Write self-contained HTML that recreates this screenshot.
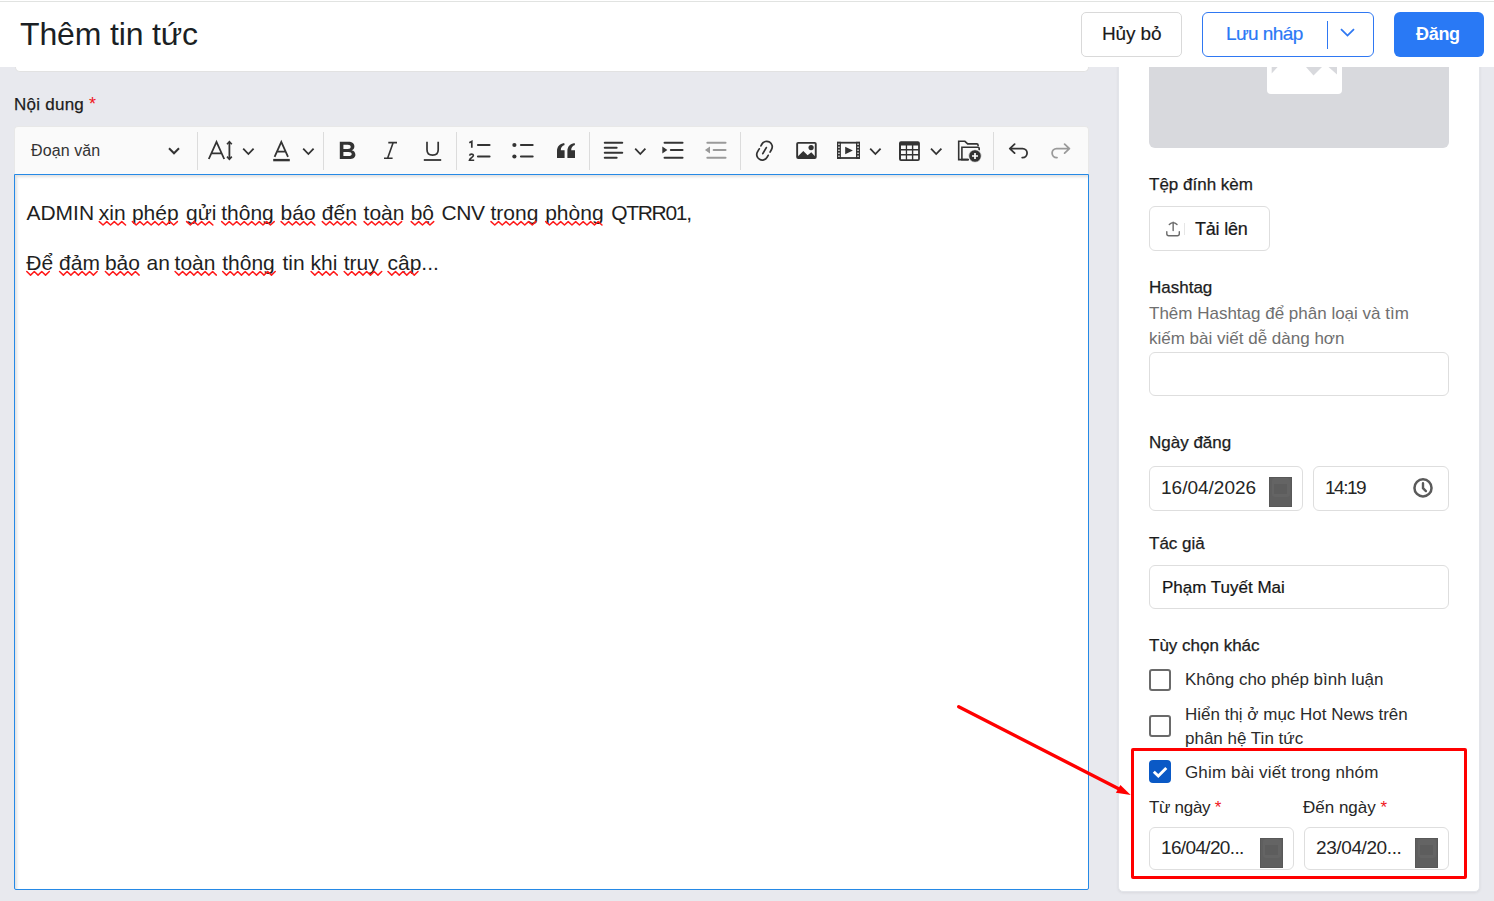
<!DOCTYPE html>
<html><head><meta charset="utf-8">
<style>
*{box-sizing:border-box;margin:0;padding:0}
html,body{width:1494px;height:901px;overflow:hidden;background:#e8e9ee;font-family:"Liberation Sans",sans-serif;color:#1f1f1f}
.a{position:absolute}
.t{position:absolute;line-height:1;white-space:nowrap}
.lbl{font-size:17px;color:#1c1c1c;-webkit-text-stroke:0.25px #1c1c1c}
.req{color:#f0161c;-webkit-text-stroke:0}
.inp{position:absolute;background:#fff;border:1px solid #dedede;border-radius:6px}
.sep{position:absolute;top:132px;width:1px;height:38px;background:#dcdcdc}
svg{position:absolute;overflow:visible}
.blk{position:absolute;background:#5f5f5f;border:1px solid #585858}
.blk::before{content:"";position:absolute;left:2px;top:0;width:18px;height:19px;border-radius:3px;background:#646464}
.blk::after{content:"";position:absolute;left:4px;top:6px;width:13px;height:10px;background:#5d5d5d}
.sq{position:absolute;width:22px;height:22px;border:2px solid #6a6a6a;border-radius:3px;background:#fff}
.ed{font-size:21px;color:#1f1f1f}
.opt{font-size:17px;color:#2b2b2b}
</style></head><body>

<!-- right card -->
<div class="a" style="left:1118px;top:-10px;width:362px;height:902px;background:#fff;border:1px solid #e3e5ea;border-radius:5px;box-shadow:0 1px 3px rgba(0,0,0,0.07)"></div>
<!-- image placeholder -->
<div class="a" style="left:1149px;top:30px;width:300px;height:118px;background:#d8d9dd;border-radius:6px"></div>
<svg style="left:1267px;top:40px" width="75" height="54" viewBox="0 0 75 54">
  <rect x="0" y="0" width="75" height="54" rx="4" fill="#fff"/>
  <polygon points="4.7,27 4.7,33.5 10.6,27" fill="#d8d9dd"/>
  <polygon points="39,27 55,27 46.5,35.4" fill="#d8d9dd"/>
  <polygon points="61.5,27 70,27 70,34.6" fill="#d8d9dd"/>
</svg>

<!-- header -->
<div class="a" style="left:0;top:0;width:1494px;height:67px;background:#fff"></div>
<div class="a" style="left:0;top:1px;width:1494px;height:1px;background:#e1e3e1"></div>
<!-- left card bottom -->
<div class="a" style="left:15px;top:-10px;width:1074px;height:82px;background:#fff;border:1px solid #e2e2e2;border-top:0;border-radius:0 0 5px 5px"></div>
<div class="a" style="left:0;top:0;width:1494px;height:67px;background:#fff"></div>
<div class="a" style="left:0;top:1px;width:1494px;height:1px;background:#e1e3e1"></div>
<div class="t" style="left:20px;top:18px;font-size:32px;color:#1b1f24;letter-spacing:-0.15px">Thêm tin tức</div>

<div class="a" style="left:1081px;top:12px;width:101px;height:45px;border:1px solid #d9d9d9;border-radius:5px;background:#fff"></div>
<div class="t" style="left:1102px;top:24px;font-size:19px;color:#1a1a1a;letter-spacing:-0.15px;-webkit-text-stroke:0.15px #1a1a1a">Hủy bỏ</div>

<div class="a" style="left:1202px;top:12px;width:172px;height:45px;border:1px solid #2f78f2;border-radius:6px;background:#fff"></div>
<div class="t" style="left:1226px;top:24px;font-size:19px;color:#2b78f5;letter-spacing:-0.6px;-webkit-text-stroke:0.2px #2b78f5">Lưu nháp</div>
<div class="a" style="left:1327px;top:21px;width:1px;height:28px;background:#2f78f2"></div>
<svg style="left:1340px;top:28px" width="15" height="9" viewBox="0 0 15 9"><path d="M1 1.2 L7.5 7.6 L14 1.2" fill="none" stroke="#2f78f2" stroke-width="1.8"/></svg>

<div class="a" style="left:1394px;top:12px;width:90px;height:45px;background:#2979f5;border-radius:6px"></div>
<div class="t" style="left:1416px;top:25px;font-size:18px;font-weight:bold;color:#fff;letter-spacing:-0.3px">Đăng</div>

<!-- Nội dung -->
<div class="t lbl" style="left:14px;top:95px;letter-spacing:0.25px">Nội dung <span class="req" style="font-size:18px">*</span></div>

<!-- toolbar -->
<div class="a" style="left:14px;top:126px;width:1075px;height:49px;background:#fafafa;border:1px solid #e8e8e8;border-bottom:0;border-radius:4px 4px 0 0"></div>
<div class="a" style="left:14px;top:174px;width:1075px;height:716px;background:#fff;border:1px solid #2589e6;border-radius:0 0 2px 2px;box-shadow:inset 2px 2px 3px rgba(0,0,0,0.12)"></div>

<div class="t" style="left:31px;top:143px;font-size:16px;color:#333;letter-spacing:0.1px">Đoạn văn</div>
<svg style="left:168px;top:147px" width="12" height="8" viewBox="0 0 12 8"><path d="M1 1.3 L6 6.3 L11 1.3" fill="none" stroke="#333" stroke-width="2"/></svg>

<div class="sep" style="left:197px"></div>
<div class="sep" style="left:323px"></div>
<div class="sep" style="left:456px"></div>
<div class="sep" style="left:589px"></div>
<div class="sep" style="left:740px"></div>
<div class="sep" style="left:993px"></div>


<!-- toolbar icons -->
<svg style="left:0;top:0" width="1494" height="901" viewBox="0 0 1494 901">
 <g fill="none" stroke="#333" stroke-width="1.8">
  <!-- font size -->
  <path d="M208.8 159 L216.5 141.9 L224.2 159 M211.3 153.4 H221.7"/>
  <path d="M229.4 142 V159" />
  <path d="M227 144.2 L229.4 141.6 L231.8 144.2 M227 156.6 L229.4 159.2 L231.8 156.6" stroke-width="1.6"/>
  <path d="M243.2 148.6 L248.4 154 L253.6 148.6" />
  <!-- font color -->
  <path d="M274.6 156.8 L281.3 141.9 L288 156.8 M276.8 151.7 H285.8"/>
  <path d="M273.2 160.1 H289.8" stroke-width="2.4"/>
  <path d="M303.2 148.6 L308.4 154 L313.6 148.6" />
  <!-- italic -->
  <path d="M388.3 142.6 H397 M384 158.2 H392.6 M393.2 142.6 L387.6 158.2" stroke-width="1.6"/>
  <!-- underline -->
  <path d="M427 141.8 V149.8 C427 153.3 429.4 155.2 432.6 155.2 C435.8 155.2 438.2 153.3 438.2 149.8 V141.8" stroke-width="1.7"/>
  <path d="M423.8 160 H441.2" stroke-width="1.8"/>
  <!-- numbered list -->
  <path d="M478 145 H489.5 M478 156.5 H489.5" stroke-width="2.2" stroke-linecap="round"/>
  <path d="M469.3 142.8 L471.8 141.4 V147.8" stroke-width="1.7"/>
  <path d="M469.6 155.6 C469.8 153.8 473.4 153.6 473.4 155.5 C473.4 157.2 469.8 158.2 469.4 160.3 H474.2" stroke-width="1.6"/>
  <!-- bulleted list -->
  <path d="M521 145 H532.6 M521 156.5 H532.6" stroke-width="2.2" stroke-linecap="round"/>
  <!-- align -->
  <path d="M604.8 142.8 H622.2 M604.8 147.7 H616.6 M604.8 152.7 H622.2 M604.8 157.8 H616.6" stroke-width="2.1" stroke-linecap="round"/>
  <path d="M635.2 148.6 L640.3 154 L645.4 148.6" />
  <!-- indent -->
  <path d="M664.6 142.8 H682.5 M670.9 150 H682.5 M664.6 157.8 H682.5" stroke-width="2.1" stroke-linecap="round"/>
  <path d="M870.2 148.6 L875.4 154 L880.6 148.6" />
  <path d="M931 148.6 L936.2 154 L941.4 148.6" />
  <!-- link -->
  <g transform="translate(764.5 150.7) rotate(30)" stroke-width="1.75" stroke-linecap="round">
    <path d="M-5.5 -2.4 V-4.5 A5.5 5.5 0 0 1 5.5 -4.5 V-1.6"/>
    <path d="M-5.5 1.0 V4.5 A5.5 5.5 0 0 0 5.5 4.5 V2.2"/>
    <path d="M0 -3.6 V3.4"/>
  </g>
  <!-- image frame -->
  <rect x="797.15" y="142.85" width="18.6" height="15.1" rx="1" stroke-width="1.9"/>
  <!-- media frame -->
  <rect x="837.9" y="142.7" width="21.2" height="15.3" stroke-width="1.8"/>
  <!-- folder -->
  <path d="M968 159.6 H958.7 V141.3 H964.9 L967.7 143.9 H976.8 Q978.1 143.9 978.1 145.3 V146.3" stroke-width="1.6"/>
  <path d="M969 159.6 H961.9 V147.2 H978 Q979.2 147.2 979.2 148.4 V150.3" stroke-width="1.6"/>
  <!-- undo -->
  <path d="M1014.6 144.2 L1009.8 148.6 L1014.6 153.1 M1009.8 148.6 H1022.6 A4.5 4.5 0 0 1 1022.6 157.6 H1022.2" stroke-width="1.8" stroke-linecap="round" stroke-linejoin="round"/>
 </g>
 <g fill="#333">
  <!-- bold -->
  <path fill-rule="evenodd" d="M339.8 141.7 H348.3 C352.3 141.7 354.4 143.7 354.4 146.4 C354.4 148.3 353.3 149.7 351.6 150.2 C354 150.6 355.4 152.5 355.4 154.8 C355.4 157.6 353.2 159.1 349.3 159.1 H339.8 Z M343.4 144.7 V149 H347.8 C349.7 149 350.7 148.3 350.7 146.8 C350.7 145.4 349.7 144.7 347.8 144.7 Z M343.4 151.9 V156.1 H348.4 C350.6 156.1 351.7 155.4 351.7 154 C351.7 152.6 350.6 151.9 348.4 151.9 Z"/>
  <!-- bullets -->
  <circle cx="514.4" cy="145" r="2.1"/><circle cx="514.4" cy="156.5" r="2.1"/>
  <!-- quote -->
  <path d="M557 157.9 V151.3 C557 146.6 559.5 143.8 564.2 143 L564.6 145.1 C562 145.9 560.9 147.6 560.8 150.3 H564.6 V157.9 Z"/>
  <path d="M567.4 157.9 V151.3 C567.4 146.6 569.9 143.8 574.6 143 L575 145.1 C572.4 145.9 571.3 147.6 571.2 150.3 H575 V157.9 Z"/>
  <!-- indent triangle -->
  <polygon points="662.3,146.5 667.4,150 662.3,153.4"/>
  <!-- image mountains & sun -->
  <polygon points="798,156.2 803.3,151 807.6,155.2 811.3,152.2 815,156.2 815,157.5 798,157.5"/>
  <circle cx="811.1" cy="147.6" r="2.6"/>
  <!-- media play + strips -->
  <rect x="837" y="141.8" width="3.9" height="17.1"/>
  <rect x="856" y="141.8" width="4" height="17.1"/>
  <polygon points="845.2,146.8 852.9,150.5 845.2,154.2"/>
  <!-- table -->
  <path fill-rule="evenodd" d="M901 141.2 H917.9 Q919.9 141.2 919.9 143.2 V158.9 Q919.9 160.9 917.9 160.9 H901 Q899 160.9 899 158.9 V143.2 Q899 141.2 901 141.2 Z M901 145.5 V148.9 H905.8 V145.5 Z M907.1 145.5 V148.9 H911.9 V145.5 Z M913.3 145.5 V148.9 H918.1 V145.5 Z M901 150.5 V154 H905.8 V150.5 Z M907.1 150.5 V154 H911.9 V150.5 Z M913.3 150.5 V154 H918.1 V150.5 Z M901 155.6 V159.2 H905.8 V155.6 Z M907.1 155.6 V159.2 H911.9 V155.6 Z M913.3 155.6 V159.2 H918.1 V155.6 Z"/>
  <!-- folder plus -->
  <circle cx="975" cy="156" r="6.3" stroke="#fafafa" stroke-width="0.8"/>
 </g>
 <g fill="#c8c8c8">
  <rect x="838" y="143.6" width="1.9" height="1.3"/><rect x="838" y="146.6" width="1.9" height="1.3"/><rect x="838" y="149.6" width="1.9" height="1.3"/><rect x="838" y="152.6" width="1.9" height="1.3"/><rect x="838" y="155.6" width="1.9" height="1.3"/>
  <rect x="857.1" y="143.6" width="1.9" height="1.3"/><rect x="857.1" y="146.6" width="1.9" height="1.3"/><rect x="857.1" y="149.6" width="1.9" height="1.3"/><rect x="857.1" y="152.6" width="1.9" height="1.3"/><rect x="857.1" y="155.6" width="1.9" height="1.3"/>
 </g>
 <path d="M975 153 V159 M972 156 H978" stroke="#fff" stroke-width="1.7"/>
 <!-- outdent & redo gray -->
 <g fill="none" stroke="#9a9a9a">
  <path d="M707.4 142.8 H725.5 M713.7 150 H725.5 M707.4 157.8 H725.5" stroke-width="2.1" stroke-linecap="round"/>
  <path d="M1064.6 144.2 L1069.4 148.6 L1064.6 153.1 M1069.4 148.6 H1056.6 A4.5 4.5 0 0 0 1056.6 157.6 H1057" stroke-width="1.8" stroke-linecap="round" stroke-linejoin="round"/>
 </g>
 <polygon points="710,146.5 704.9,150 710,153.4" fill="#9a9a9a"/>
</svg>

<!-- editor text -->
<div class="t ed" style="left:26.4px;top:202px">ADMIN</div>
<div class="t ed" style="left:98.8px;top:202px">xin</div>
<div class="t ed" style="left:131.9px;top:202px">phép</div>
<div class="t ed" style="left:186.1px;top:202px">gửi</div>
<div class="t ed" style="left:221.2px;top:202px">thông</div>
<div class="t ed" style="left:280.6px;top:202px">báo</div>
<div class="t ed" style="left:321.8px;top:202px">đến</div>
<div class="t ed" style="left:363.6px;top:202px">toàn</div>
<div class="t ed" style="left:410.7px;top:202px">bộ</div>
<div class="t ed" style="left:441.4px;top:202px;letter-spacing:-0.4px">CNV</div>
<div class="t ed" style="left:490.5px;top:202px">trong</div>
<div class="t ed" style="left:545.2px;top:202px">phòng</div>
<div class="t ed" style="left:611.2px;top:202px;letter-spacing:-1.3px">QTRR01,</div>
<div class="t ed" style="left:26.3px;top:252px">Để</div>
<div class="t ed" style="left:59.1px;top:252px">đảm</div>
<div class="t ed" style="left:104.9px;top:252px">bảo</div>
<div class="t ed" style="left:146.6px;top:252px">an</div>
<div class="t ed" style="left:174.6px;top:252px">toàn</div>
<div class="t ed" style="left:222.2px;top:252px">thông</div>
<div class="t ed" style="left:282.4px;top:252px">tin</div>
<div class="t ed" style="left:310.6px;top:252px">khi</div>
<div class="t ed" style="left:343.7px;top:252px">truy</div>
<div class="t ed" style="left:387.5px;top:252px">cập...</div>
<svg style="left:0;top:0" width="1494" height="901"><path d="M99.30,221.6 L103.05,225.0 L106.80,221.6 L110.55,225.0 L114.30,221.6 L118.05,225.0 L121.80,221.6 L125.55,225.0 M132.40,221.6 L136.15,225.0 L139.90,221.6 L143.65,225.0 L147.40,221.6 L151.15,225.0 L154.90,221.6 L158.65,225.0 L162.40,221.6 L166.15,225.0 L169.90,221.6 L173.65,225.0 L177.40,221.6 M186.60,221.6 L190.35,225.0 L194.10,221.6 L197.85,225.0 L201.60,221.6 L205.35,225.0 L209.10,221.6 L212.85,225.0 M221.70,221.6 L225.45,225.0 L229.20,221.6 L232.95,225.0 L236.70,221.6 L240.45,225.0 L244.20,221.6 L247.95,225.0 L251.70,221.6 L255.45,225.0 L259.20,221.6 L262.95,225.0 L266.70,221.6 L270.45,225.0 L274.20,221.6 M281.10,221.6 L284.85,225.0 L288.60,221.6 L292.35,225.0 L296.10,221.6 L299.85,225.0 L303.60,221.6 L307.35,225.0 L311.10,221.6 L314.85,225.0 M322.30,221.6 L326.05,225.0 L329.80,221.6 L333.55,225.0 L337.30,221.6 L341.05,225.0 L344.80,221.6 L348.55,225.0 L352.30,221.6 L356.05,225.0 M364.10,221.6 L367.85,225.0 L371.60,221.6 L375.35,225.0 L379.10,221.6 L382.85,225.0 L386.60,221.6 L390.35,225.0 L394.10,221.6 L397.85,225.0 L401.60,221.6 M411.20,221.6 L414.95,225.0 L418.70,221.6 L422.45,225.0 L426.20,221.6 L429.95,225.0 L433.70,221.6 M491.00,221.6 L494.75,225.0 L498.50,221.6 L502.25,225.0 L506.00,221.6 L509.75,225.0 L513.50,221.6 L517.25,225.0 L521.00,221.6 L524.75,225.0 L528.50,221.6 L532.25,225.0 L536.00,221.6 M545.70,221.6 L549.45,225.0 L553.20,221.6 L556.95,225.0 L560.70,221.6 L564.45,225.0 L568.20,221.6 L571.95,225.0 L575.70,221.6 L579.45,225.0 L583.20,221.6 L586.95,225.0 L590.70,221.6 L594.45,225.0 L598.20,221.6 L601.95,225.0 M26.80,271.5 L30.55,275.1 L34.30,271.5 L38.05,275.1 L41.80,271.5 L45.55,275.1 L49.30,271.5 M59.60,271.5 L63.35,275.1 L67.10,271.5 L70.85,275.1 L74.60,271.5 L78.35,275.1 L82.10,271.5 L85.85,275.1 L89.60,271.5 L93.35,275.1 L97.10,271.5 M105.40,271.5 L109.15,275.1 L112.90,271.5 L116.65,275.1 L120.40,271.5 L124.15,275.1 L127.90,271.5 L131.65,275.1 L135.40,271.5 L139.15,275.1 M175.10,271.5 L178.85,275.1 L182.60,271.5 L186.35,275.1 L190.10,271.5 L193.85,275.1 L197.60,271.5 L201.35,275.1 L205.10,271.5 L208.85,275.1 L212.60,271.5 L216.35,275.1 M222.70,271.5 L226.45,275.1 L230.20,271.5 L233.95,275.1 L237.70,271.5 L241.45,275.1 L245.20,271.5 L248.95,275.1 L252.70,271.5 L256.45,275.1 L260.20,271.5 L263.95,275.1 L267.70,271.5 L271.45,275.1 L275.20,271.5 M311.10,271.5 L314.85,275.1 L318.60,271.5 L322.35,275.1 L326.10,271.5 L329.85,275.1 L333.60,271.5 L337.35,275.1 M344.20,271.5 L347.95,275.1 L351.70,271.5 L355.45,275.1 L359.20,271.5 L362.95,275.1 L366.70,271.5 L370.45,275.1 L374.20,271.5 L377.95,275.1 L381.70,271.5 M388.00,271.5 L391.75,275.1 L395.50,271.5 L399.25,275.1 L403.00,271.5 L406.75,275.1 L410.50,271.5 L414.25,275.1 L418.00,271.5" fill="none" stroke="#ff1a1a" stroke-width="1.5" stroke-linejoin="round" stroke-linecap="round"/></svg>

<!-- right panel content -->
<div class="t lbl" style="left:1149px;top:176px">Tệp đính kèm</div>
<div class="inp" style="left:1149px;top:206px;width:121px;height:45px"></div>
<div class="t" style="left:1195px;top:220px;font-size:18px;color:#1a1a1a;letter-spacing:-0.2px;-webkit-text-stroke:0.2px #1a1a1a">Tải lên</div>
<div class="a" style="left:1184px;top:223px;width:1px;height:12px;background:#e6e6e6"></div>
<svg style="left:0;top:0" width="1494" height="901">
 <g fill="none" stroke="#6a6a6a" stroke-width="1.4" stroke-linecap="round">
  <path d="M1173.15 222.3 V230.6 M1169.3 224.6 Q1173.15 220.6 1177 224.6"/>
  <path d="M1166.8 231.8 V233.8 Q1166.8 235.8 1168.8 235.8 H1177.3 Q1179.3 235.8 1179.3 233.8 V231.8"/>
 </g>
</svg>


<div class="t lbl" style="left:1149px;top:279px">Hashtag</div>
<div class="t" style="left:1149px;top:305px;font-size:17px;color:#6f6f6f">Thêm Hashtag để phân loại và tìm</div>
<div class="t" style="left:1149px;top:330px;font-size:17px;color:#6f6f6f">kiếm bài viết dễ dàng hơn</div>
<div class="inp" style="left:1149px;top:352px;width:300px;height:44px"></div>

<div class="t lbl" style="left:1149px;top:434px">Ngày đăng</div>
<div class="inp" style="left:1149px;top:466px;width:154px;height:45px"></div>
<div class="t" style="left:1161px;top:478px;font-size:19px;color:#262626">16/04/2026</div>
<div class="blk" style="left:1269px;top:477px;width:23px;height:30px"></div>
<div class="inp" style="left:1313px;top:466px;width:136px;height:45px"></div>
<div class="t" style="left:1325px;top:478px;font-size:19px;color:#262626;letter-spacing:-1.5px">14:19</div>
<svg style="left:0;top:0" width="1494" height="901"><circle cx="1423" cy="487.9" r="8.55" fill="none" stroke="#5a5a5a" stroke-width="2.5"/><path d="M1423 483.3 V488.2 L1425.9 491.1" fill="none" stroke="#5a5a5a" stroke-width="2.4" stroke-linecap="round"/></svg>

<div class="t lbl" style="left:1149px;top:535px">Tác giả</div>
<div class="inp" style="left:1149px;top:565px;width:300px;height:44px"></div>
<div class="t" style="left:1162px;top:579px;font-size:17px;color:#141414;-webkit-text-stroke:0.2px #141414">Phạm Tuyết Mai</div>

<div class="t lbl" style="left:1149px;top:637px">Tùy chọn khác</div>
<div class="sq" style="left:1149px;top:669px"></div>
<div class="t opt" style="left:1185px;top:671px">Không cho phép bình luận</div>
<div class="sq" style="left:1149px;top:715px"></div>
<div class="t opt" style="left:1185px;top:706px">Hiển thị ở mục Hot News trên</div>
<div class="t opt" style="left:1185px;top:730px">phân hệ Tin tức</div>

<div class="a" style="left:1149px;top:760px;width:22px;height:23px;background:#0a59c6;border-radius:4px"></div>
<svg style="left:1149px;top:760px" width="22" height="23" viewBox="0 0 22 23"><path d="M4.8 11.8 L9.3 16 L17.3 8" fill="none" stroke="#fff" stroke-width="2.9"/></svg>
<div class="t opt" style="left:1185px;top:764px;letter-spacing:0.15px">Ghim bài viết trong nhóm</div>

<div class="t" style="left:1149px;top:799px;font-size:17px;color:#262626;letter-spacing:-0.3px">Từ ngày <span class="req">*</span></div>
<div class="t" style="left:1303px;top:799px;font-size:17px;color:#262626">Đến ngày <span class="req">*</span></div>
<div class="inp" style="left:1149px;top:827px;width:145px;height:43px"></div>
<div class="t" style="left:1161px;top:838px;font-size:19px;color:#262626;letter-spacing:-0.65px">16/04/20...</div>
<div class="blk" style="left:1260px;top:838px;width:23px;height:30px"></div>
<div class="inp" style="left:1304px;top:827px;width:145px;height:43px"></div>
<div class="t" style="left:1316px;top:838px;font-size:19px;color:#262626;letter-spacing:-0.4px">23/04/20...</div>
<div class="blk" style="left:1415px;top:838px;width:23px;height:30px"></div>

<!-- red annotation -->
<div class="a" style="left:1131px;top:748px;width:336px;height:131px;border:3px solid #ff0000;border-radius:2px"></div>
<svg style="left:0;top:0" width="1494" height="901" viewBox="0 0 1494 901">
  <line x1="958.7" y1="706.7" x2="1123" y2="791" stroke="#ff0000" stroke-width="3.4" stroke-linecap="round"/>
  <polygon points="1130.7,795 1120.4,785 1115.9,792.7" fill="#ff0000"/>
</svg>

</body></html>
